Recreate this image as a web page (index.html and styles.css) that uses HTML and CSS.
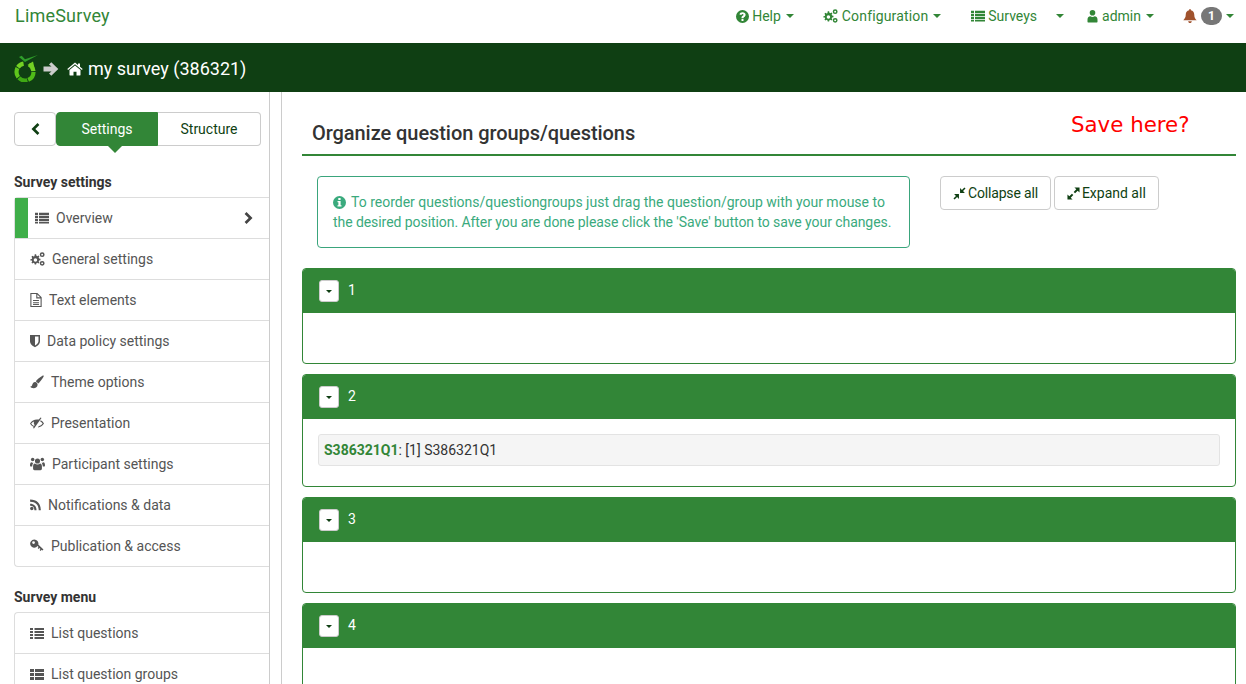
FILE: index.html
```html
<!DOCTYPE html>
<html lang="en">
<head>
<meta charset="utf-8">
<title>LimeSurvey</title>
<link rel="stylesheet" href="styles.css">
</head>
<body>
<svg class="defs" width="0" height="0" aria-hidden="true">
  <symbol id="i-question" viewBox="0.5 0.5 13 13"><path fill-rule="evenodd" d="M7 .5a6.500 6.500 0 1 1 0 13 6.500 6.500 0 0 1 0-13zM6 9.600v1.900h2V9.600zM7 2.700C5.300 2.700 4.200 3.600 4 5l1.900.4c.1-.6.500-1 1.100-1 .6 0 1 .3 1 .8 0 .5-.4.800-.9 1.100C6.400 6.800 6 7.300 6 8.100V8.800h2v-.4c0-.4.300-.6.800-.9C9.500 7 10.100 6.300 10.100 5.200 10.100 3.600 8.800 2.700 7 2.700z"/></symbol>
  <symbol id="i-info" viewBox="0.5 0.5 13 13"><path fill-rule="evenodd" d="M7 .5a6.500 6.500 0 1 1 0 13 6.500 6.500 0 0 1 0-13zM5.800 2.500v1.900h2.300V2.500zM5 5.500v1.300h.9v3H5V11h4V9.800h-.9V5.500z"/></symbol>
  <symbol id="i-cogs" viewBox="0.6 0.4 14 13.2"><path fill-rule="evenodd" d="M5 2.600h1.300l.3 1.300.8.400 1.100-.7.9.9-.7 1.100.4.900 1.300.3v1.300l-1.300.3-.4.900.7 1.100-.9.900-1.100-.7-.8.300-.3 1.300H5l-.3-1.300-.8-.3-1.100.7-.9-.9.7-1.100-.4-.9L.9 8.500V7.200l1.300-.3.4-.9-.7-1.100.9-.9 1.100.7.800-.4zM5.650 6.200a1.650 1.650 0 1 0 0 3.300 1.650 1.650 0 0 0 0-3.300z"/><path fill-rule="evenodd" d="M12 .6a2.300 2.300 0 1 1 0 4.600 2.300 2.300 0 0 1 0-4.600zm0 1.400a.9.900 0 1 0 0 1.800.9.900 0 0 0 0-1.800zM12 8.800a2.300 2.300 0 1 1 0 4.600 2.300 2.300 0 0 1 0-4.600zm0 1.400a.9.900 0 1 0 0 1.800.9.900 0 0 0 0-1.800z"/></symbol>
  <symbol id="i-thlist" viewBox="0 0 14 14"><path d="M0 1.800h3v2.200H0zM4 1.800h10v2.200H4zM0 4.800h3v2.200H0zM4 4.800h10v2.200H4zM0 7.800h3v2.200H0zM4 7.800h10v2.200H4zM0 10.800h3V12.500H0zM4 10.800h10V12.500H4z"/></symbol>
  <symbol id="i-list" viewBox="0 0 14 14"><path d="M0 2h3v2H0zM4.500 2H14v2H4.500zM0 5h3v2H0zM4.500 5H14v2H4.500zM0 8h3v2H0zM4.500 8H14v2H4.500zM0 11h3v2H0zM4.500 11H14v2H4.500z"/></symbol>
  <symbol id="i-groups" viewBox="0 0 14 14"><path d="M0 2h4v3H0zM5 2h9v3H5zM0 6h4v3H0zM5 6h9v3H5zM0 10h4v3H0zM5 10h9v3H5z"/></symbol>
  <symbol id="i-user" viewBox="1 0 10 14"><circle cx="6" cy="3.800" r="2.800"/><path d="M1 13v-2.500C1 8.300 2.500 7.200 3.800 7.200 4.500 7.800 5.200 8 6 8s1.500-.2 2.200-.8c1.300 0 2.800 1.100 2.800 3.300V13c0 .3-.3.500-.6.500H1.600C1.300 13.500 1 13.300 1 13z"/></symbol>
  <symbol id="i-bell" viewBox="0.7 .5 12.600 13.200"><path d="M6.200 1.300C6.200.8 6.600.5 7 .5s.8.300.8.800v.4c2 .4 3.200 2 3.200 4 0 3 .9 4.100 2.300 5.300H.7C2.100 9.500 3 8.600 3 5.700c0-2 1.200-3.600 3.200-4zM5.300 12h3.400c0 1-.8 1.700-1.700 1.700S5.300 13 5.300 12z"/></symbol>
  <symbol id="i-arrow" viewBox="0 0 16 16"><path d="M8.300 1.200L15.300 8l-7 6.800L6 12.600l2.500-2.200H.5V5.600h8L6 3.400z"/></symbol>
  <symbol id="i-home" viewBox="0 0 16 14"><path d="M8 .6l3 2.500V1.500h2v3.300l2.700 2.300-.8.9L8 2.300 1.100 8l-.8-.9z"/><path d="M8 3.400l5.500 4.500V13c0 .3-.2.500-.5.500H9.500V9.700h-3v3.800H3c-.3 0-.5-.2-.5-.5V7.900z"/></symbol>
  <symbol id="i-chev-l" viewBox="0 0 10 14"><path d="M7.500 1L9.400 2.900 5.300 7l4.100 4.100L7.500 13 1.500 7z"/></symbol>
  <symbol id="i-chev-r" viewBox="0 0 10 14"><path d="M2.500 1L.6 2.900 4.700 7 .6 11.100 2.500 13l6-6z"/></symbol>
  <symbol id="i-file" viewBox="1 .5 10.500 13"><path fill-rule="evenodd" d="M1 .5h6.500l4 4v9H1zM2 1.500v11h8.500V5.500h-4v-4zM7.500 1.900v2.600h2.600zM3.500 7H9v1H3.500zM3.500 9H9v1H3.500z"/><path d="M3.500 10.700H9v.9H3.500z"/></symbol>
  <symbol id="i-shield" viewBox="0.5 1 10 12.500"><path fill-rule="evenodd" d="M.5 1.200h10v6.300c0 3-3 5-5 6-2-1-5-3-5-6zM5.500 2.800v8.900c1.500-.8 3.500-2.400 3.500-4.300V2.800z"/></symbol>
  <symbol id="i-brush" viewBox="0 0 14 14"><path d="M13.500.6c.4.300.2.900-.1 1.400C12 4.300 9.900 7.100 8.300 8.500L5.800 6.200C7.200 4.500 10.100 2.200 12.400.8c.4-.2.800-.4 1.100-.2z"/><path d="M5.200 7c1.100.1 2.300 1.200 2.400 2.500C7.600 12 5.700 13.200 3.500 13.200 2 13.200.7 12.600.2 11.500c.9 0 1.500-.3 1.800-1.100C2.500 8.800 3.500 6.900 5.200 7z"/></symbol>
  <symbol id="i-eye" viewBox="0.5 1 14 12"><path fill-rule="evenodd" d="M11 1.500l1 .6-7.500 10.500-1-.6.800-1.200C2.600 10.100 1.300 8.800.5 7.400 2.100 4.800 4.600 3.400 7.500 3.400c.6 0 1.200.1 1.800.2zM4.600 5.500C3.500 6 2.500 6.700 1.700 7.400c.6 1 1.600 1.900 2.900 2.500l.6-.9C4.700 8.400 4.300 7.800 4.300 7.200c0-.6.100-1.200.3-1.700zM11.200 4.300c1.400.7 2.500 1.800 3.300 3.100-1.300 2.300-3.600 3.700-6.100 4l.7-1.200c1.700-.5 3-1.500 4-2.800-.6-.8-1.500-1.600-2.500-2.100z"/></symbol>
  <symbol id="i-users" viewBox="0.2 1 14.600 13"><circle cx="7.500" cy="4.600" r="2.500"/><circle cx="2.800" cy="3.200" r="1.700"/><circle cx="12.200" cy="3.200" r="1.700"/><path d="M3.200 12.200V9.800C3.200 8.200 4 7 5 7c.7.600 1.500.9 2.500.9S9.300 7.600 10 7c1 0 1.800 1.200 1.800 2.800v2.400c0 .8-.6 1.300-1.400 1.300H4.600c-.8 0-1.400-.5-1.400-1.300zM.2 8.700c0-1.600.4-3 1.500-3 .5.400 1 .7 1.900.6-.6.600-1 1.500-1.300 3.700H1c-.5 0-.8-.4-.8-1.300zM14.800 8.700c0-1.600-.4-3-1.500-3-.5.400-1 .7-1.900.6.600.6 1 1.500 1.300 3.700H14c.5 0 .8-.4.800-1.300z"/></symbol>
  <symbol id="i-rss" viewBox="0.5 2 10.500 11"><circle cx="2.200" cy="10.800" r="1.600"/><path d="M.6 6.400c3.700 0 6.100 2.400 6.100 6H4.700c0-2.600-1.500-4.100-4.100-4.100z"/><path d="M.6 2.300C7 2.300 10.800 6 10.800 12.400H8.800C8.800 7.200 5.800 4.300.6 4.300z"/></symbol>
  <symbol id="i-key" viewBox="0.5 2 13 12"><path fill-rule="evenodd" d="M4.500 2a3.800 3.800 0 0 1 3.700 4.700l4.800 4.500-.8 1-.9-.7-.9 1.100-1-.8.800-1-.9-.9-.8.900-.9-.9.900-.9-1-.9A3.800 3.800 0 1 1 4.500 2zM3.800 3.500a1.300 1.300 0 1 0 0 2.600 1.300 1.300 0 0 0 0-2.600z"/></symbol>
  <symbol id="i-compress" viewBox="0 0 14 14"><path d="M7.600 6.400V1.200l2 2L12.300.5l1.200 1.200-2.700 2.700 2 2zM6.400 7.600v5.200l-2-2-2.700 2.700-1.200-1.200 2.700-2.700-2-2z"/></symbol>
  <symbol id="i-expand" viewBox="0 0 14 14"><path d="M13.500.5V6l-2-2-2.800 2.800L7.200 5.300 10 2.500l-2-2zM.5 13.500V8l2 2 2.800-2.800 1.500 1.500L4 11.500l2 2z"/></symbol>
</svg>

<header class="topbar">
  <a class="brand">LimeSurvey</a>
  <nav class="topnav">
    <a class="nav-link"><svg class="ic ic13"><use href="#i-question"/></svg><span class="nav-gap-s">Help</span><i class="caret"></i></a>
    <a class="nav-link sep29"><svg class="ic ic15"><use href="#i-cogs"/></svg><span class="nav-gap wide">Configuration</span><i class="caret"></i></a>
    <a class="nav-link sep30"><svg class="ic ic14"><use href="#i-thlist"/></svg><span class="nav-gap-s">Surveys</span></a>
    <a class="nav-link sep19"><i class="caret caret-only"></i></a>
    <a class="nav-link sep23"><svg class="ic ic-user"><use href="#i-user"/></svg><span class="nav-gap">admin</span><i class="caret"></i></a>
    <a class="nav-link sep29"><svg class="ic ic14 bell"><use href="#i-bell"/></svg><span class="badge">1</span><i class="caret caret-s"></i></a>
  </nav>
</header>

<div class="surveybar">
  <svg class="logo" viewBox="0 0 26 28" width="26" height="28" fill="none" stroke-width="4.200">
    <circle cx="12" cy="18" r="8.500" pathLength="360" stroke="#50bb18" stroke-dasharray="68 292"/>
    <circle cx="12" cy="18" r="8.500" pathLength="360" stroke="#3fa914" stroke-dasharray="62 298" stroke-dashoffset="-74"/>
    <circle cx="12" cy="18" r="8.500" pathLength="360" stroke="#5fc61c" stroke-dasharray="66 294" stroke-dashoffset="-142"/>
    <circle cx="12" cy="18" r="8.500" pathLength="360" stroke="#74d124" stroke-dasharray="46 314" stroke-dashoffset="-214"/>
    <circle cx="12" cy="18" r="8.500" pathLength="360" stroke="#74d124" stroke-dasharray="56 304" stroke-dashoffset="-298"/>
    <path d="M14.500 11L20 7.500l1.500 6.500z" fill="#74d124"/>
    <path d="M6 3l2.700-1.300L12 5.300 25 1 12 8z" fill="#2f9e2b"/>
  </svg>
  <svg class="ic bar-arrow"><use href="#i-arrow"/></svg>
  <svg class="ic bar-home"><use href="#i-home"/></svg>
  <span class="survey-name">my survey (386321)</span>
</div>

<div class="layout">
  <aside class="sidebar">
    <div class="side-content">
      <div class="tabs">
        <button class="tab tab-back"><svg class="ic chev"><use href="#i-chev-l"/></svg></button>
        <button class="tab tab-active">Settings</button>
        <button class="tab tab-last">Structure</button>
      </div>
      <h3 class="side-head first">Survey settings</h3>
      <ul class="menu">
        <li class="menu-item active"><span class="active-bar"></span><svg class="ic mi"><use href="#i-thlist"/></svg><span class="lbl">Overview</span><svg class="ic chev-r"><use href="#i-chev-r"/></svg></li>
        <li class="menu-item"><svg class="ic mi mi15"><use href="#i-cogs"/></svg><span class="lbl">General settings</span></li>
        <li class="menu-item"><svg class="ic mi mi12"><use href="#i-file"/></svg><span class="lbl">Text elements</span></li>
        <li class="menu-item"><svg class="ic mi mi10"><use href="#i-shield"/></svg><span class="lbl">Data policy settings</span></li>
        <li class="menu-item"><svg class="ic mi"><use href="#i-brush"/></svg><span class="lbl">Theme options</span></li>
        <li class="menu-item"><svg class="ic mi"><use href="#i-eye"/></svg><span class="lbl">Presentation</span></li>
        <li class="menu-item"><svg class="ic mi mi15"><use href="#i-users"/></svg><span class="lbl">Participant settings</span></li>
        <li class="menu-item"><svg class="ic mi mi11"><use href="#i-rss"/></svg><span class="lbl">Notifications &amp; data</span></li>
        <li class="menu-item"><svg class="ic mi"><use href="#i-key"/></svg><span class="lbl">Publication &amp; access</span></li>
      </ul>
      <h3 class="side-head">Survey menu</h3>
      <ul class="menu">
        <li class="menu-item"><svg class="ic mi"><use href="#i-list"/></svg><span class="lbl">List questions</span></li>
        <li class="menu-item"><svg class="ic mi"><use href="#i-groups"/></svg><span class="lbl">List question groups</span></li>
      </ul>
    </div>
    <div class="side-rail"></div>
  </aside>

  <main class="main">
    <div class="title-row">
      <h1 class="page-title">Organize question groups/questions</h1>
      <span class="save-note">Save here?</span>
    </div>
    <div class="tools">
      <div class="notice"><svg class="ic info"><use href="#i-info"/></svg>To reorder questions/questiongroups just drag the question/group with your mouse to <span class="notice-tail">the desired position. After you are done please click the 'Save' button to save your changes.</span></div>
      <div class="tool-btns">
        <button class="btn btn-collapse"><svg class="ic btn-ic"><use href="#i-compress"/></svg>Collapse all</button>
        <button class="btn"><svg class="ic btn-ic"><use href="#i-expand"/></svg>Expand all</button>
      </div>
    </div>
    <section class="group">
      <div class="group-head"><button class="toggle"><i class="caret caret-dark"></i></button><span class="num">1</span></div>
      <div class="group-body"></div>
    </section>
    <section class="group">
      <div class="group-head"><button class="toggle"><i class="caret caret-dark"></i></button><span class="num">2</span></div>
      <div class="group-body filled"><div class="question"><b class="qcode">S386321Q1</b>: [1] S386321Q1</div></div>
    </section>
    <section class="group">
      <div class="group-head"><button class="toggle"><i class="caret caret-dark"></i></button><span class="num">3</span></div>
      <div class="group-body"></div>
    </section>
    <section class="group">
      <div class="group-head"><button class="toggle"><i class="caret caret-dark"></i></button><span class="num">4</span></div>
      <div class="group-body"></div>
    </section>
  </main>
</div>
</body>
</html>
```
FILE: styles.css
```css
* { box-sizing: border-box; }
html, body { margin: 0; height: 684px; overflow: hidden; background: #fff; }
body { font: 14px/20px Roboto, "Liberation Sans", sans-serif; color: #333; }
.defs { position: absolute; }
.ic { display: block; fill: currentColor; flex: none; }

.topbar { height: 43px; display: flex; align-items: flex-start; justify-content: space-between; padding: 0 12px 0 15px; color: #328637; }
.brand { font-size: 18px; line-height: 32px; letter-spacing: .2px; }
.topnav { display: flex; align-items: center; height: 32px; }
.nav-link { display: flex; align-items: center; color: #328637; }
.sep30 { margin-left: 30px; }
.sep29 { margin-left: 29px; }
.sep19 { margin-left: 19px; }
.sep23 { margin-left: 23px; }
.nav-gap { margin-left: 4px; }
.nav-gap-s { margin-left: 3px; }
.wide { letter-spacing: .15px; }
.ic13 { width: 13px; height: 13px; }
.ic14 { width: 14px; height: 14px; }
.ic15 { width: 15px; height: 14px; }
.ic-user { width: 11px; height: 14px; }
.caret { display: block; width: 0; height: 0; border: 4px solid transparent; border-top-color: currentColor; border-bottom: 0; margin-left: 5px; }
.caret-only { margin-left: 0; border-width: 4.5px; border-bottom: 0; }
.caret-s { margin-left: 4px; }
.bell { color: #a0522d; }
.badge { margin-left: 4px; width: 21px; height: 18px; border-radius: 9px; background: #777; color: #fff; font-size: 12px; font-weight: 700; line-height: 18px; text-align: center; }

.surveybar { height: 49px; background: #0f3f13; display: flex; align-items: center; padding: 2px 0 0 13px; color: #fff; font-size: 18px; }
.logo { margin-top: -1px; }
.bar-arrow { width: 16px; height: 16px; margin-left: 4px; color: #ccc; }
.bar-home { width: 16px; height: 14px; margin-left: 8px; }
.survey-name { margin-left: 5px; }

.layout { display: flex; height: 592px; }
.sidebar { width: 282px; display: flex; flex: none; }
.side-content { width: 270px; padding: 20px 0 0 14px; border-right: 1px solid #ccc; }
.side-rail { width: 12px; border-right: 1px solid #ccc; }

.tabs { display: flex; height: 34px; width: 247px; }
.tab { font: inherit; color: #0f3f13; background: #fff; border: 1px solid #ccc; padding: 0; display: flex; align-items: center; justify-content: center; }
.tab-back { width: 42px; border-radius: 4px; }
.chev { width: 10px; height: 14px; }
.tab-active { width: 102px; background: #328637; border-color: #328637; color: #fff; border-radius: 4px 0 0 4px; position: relative; }
.tab-active::after { content: ""; position: absolute; left: 50px; top: 100%; border: 8px solid transparent; border-top-color: #328637; border-bottom: 0; }
.tab-last { width: 103px; border-left: 0; border-radius: 0 4px 4px 0; }

.side-head { margin: 20px 0 0; font-size: 14px; line-height: 20px; font-weight: 700; color: #333; }
.side-head.first { margin-top: 26px; }
.menu { list-style: none; margin: 5px 0 0; padding: 0; border: 1px solid #ddd; border-right: 0; border-radius: 4px 0 0 4px; }
.menu-item { display: flex; align-items: center; height: 41px; padding-left: 15px; color: #555; border-bottom: 1px solid #ddd; }
.menu-item:last-child { border-bottom: 0; height: 40px; }
.active-bar { width: 13px; height: 40px; background: #3fae49; margin: 0 7px 0 -15px; flex: none; }
.mi { width: 14px; height: 14px; }
.mi15 { width: 15px; }
.mi12 { width: 12px; }
.mi11 { width: 11px; }
.mi10 { width: 10px; }
.lbl { margin-left: 7px; }
.chev-r { width: 10px; height: 14px; margin-left: auto; margin-right: 15px; color: #444; }

.main { flex: 1; padding: 0 10px 0 20px; min-width: 0; }
.title-row { height: 64px; border-bottom: 2px solid #328637; padding: 27px 10px 0; position: relative; }
.page-title { margin: 0; font-size: 20px; line-height: 28px; font-weight: 500; color: #333; letter-spacing: -.06px; }
.save-note { position: absolute; left: 769px; top: 18px; font: 21.33px/30px "DejaVu Sans", sans-serif; color: #f00; }

.tools { display: flex; padding: 20px 0 0 15px; height: 112px; }
.notice { width: 593px; height: 72px; padding: 15px 10px 15px 15px; border: 1px solid #3aa57c; border-radius: 4px; color: #3aaa7d; }
.notice-tail { letter-spacing: -.065px; }
.info { display: inline-block; width: 13px; height: 13px; margin-right: 5px; vertical-align: -2px; color: #3aaa7d; }
.tool-btns { display: flex; gap: 3px; margin-left: 30px; }
.btn { height: 34px; font: inherit; color: #0f3f13; background: #fff; border: 1px solid #ccc; border-radius: 4px; padding: 0 12px; display: flex; align-items: center; }
.btn-collapse { letter-spacing: -.17px; }
.btn-ic { width: 13px; height: 13px; margin-right: 2px; }

.group { border: 1px solid #328637; border-radius: 4px; margin-bottom: 10px; overflow: hidden; }
.group-head { height: 44px; background: #328637; color: #fff; display: flex; align-items: center; padding-left: 16px; }
.toggle { width: 20px; height: 22px; padding: 0; background: #fff; border: 1px solid #ccc; border-radius: 3px; display: flex; align-items: center; justify-content: center; margin-right: 9px; }
.caret-dark { margin: 1px 0 0; color: #0f3f13; border-width: 3.5px; border-bottom: 0; }
.num { margin-top: -2px; }
.group-body { height: 50px; }
.group-body.filled { height: 67px; padding: 15px; }
.question { height: 32px; background: #f5f5f5; border: 1px solid #e3e3e3; border-radius: 3px; padding: 0 5px; line-height: 30px; }
.qcode { color: #328637; }
```
